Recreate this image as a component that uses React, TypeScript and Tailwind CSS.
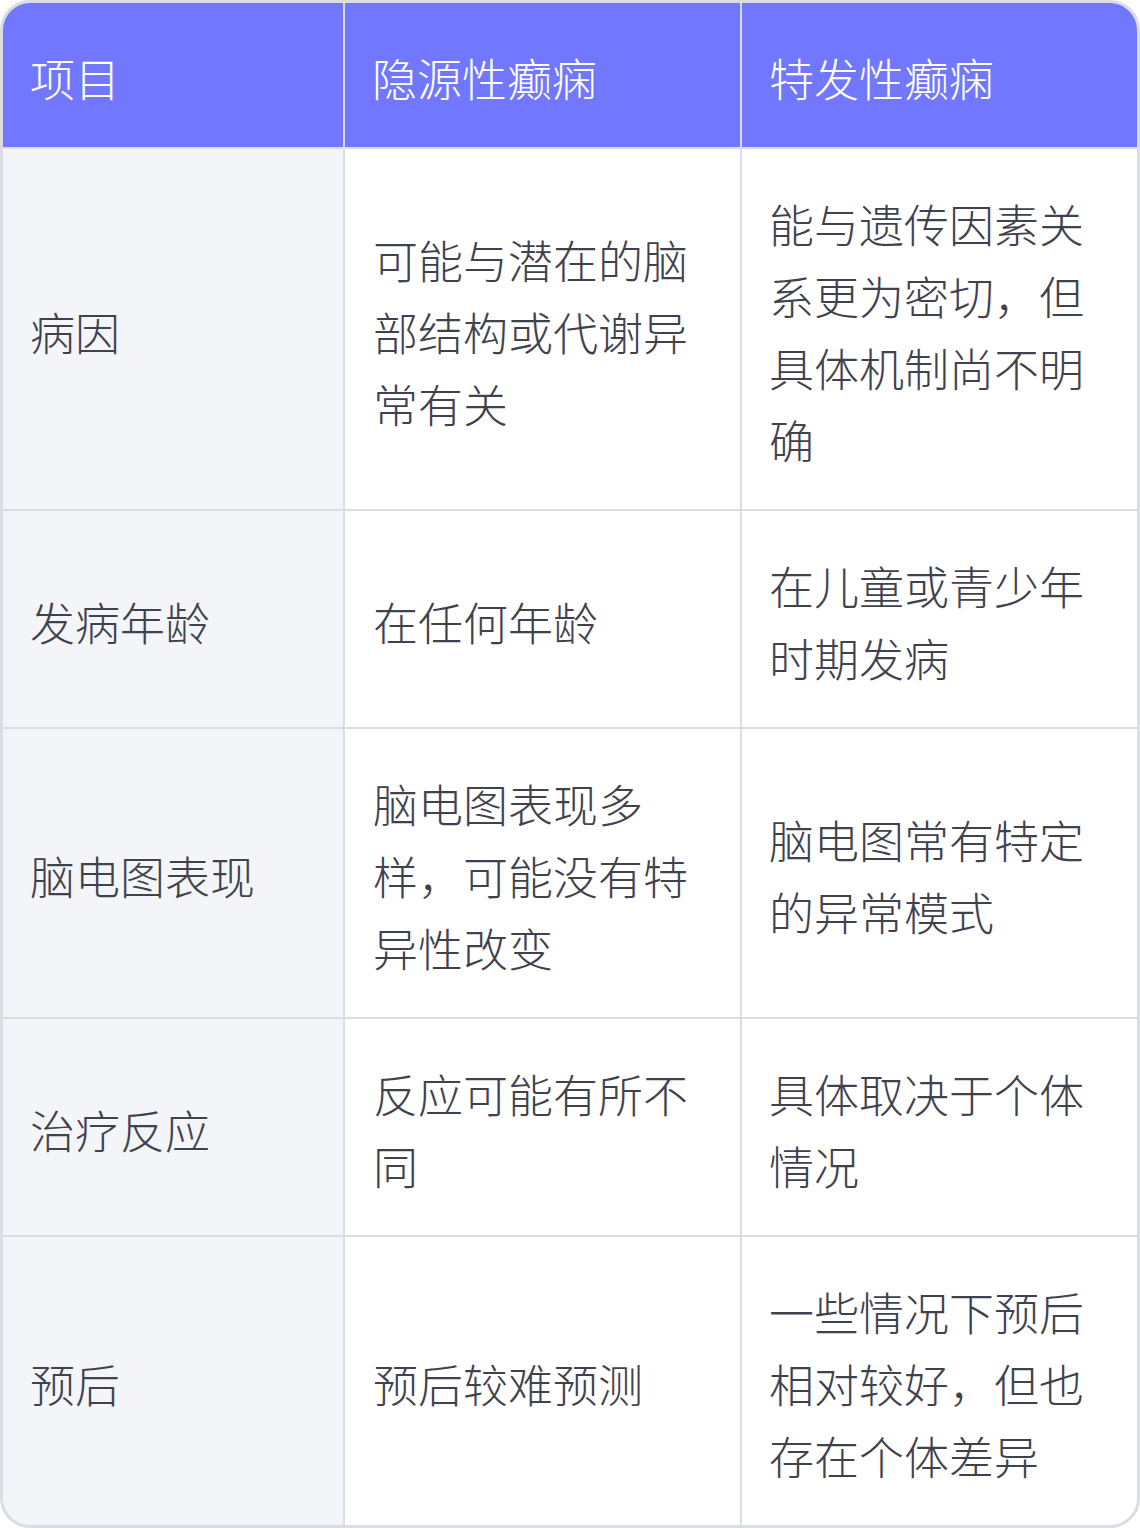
const headers = ["项目", "隐源性癫痫", "特发性癫痫"];

const rows: { label: string; cryptogenic: string; idiopathic: string; h: string }[] = [
  {
    label: "病因",
    cryptogenic: "可能与潜在的脑部结构或代谢异常有关",
    idiopathic: "能与遗传因素关系更为密切，但具体机制尚不明确",
    h: "h-[360px]",
  },
  {
    label: "发病年龄",
    cryptogenic: "在任何年龄",
    idiopathic: "在儿童或青少年时期发病",
    h: "h-[216px]",
  },
  {
    label: "脑电图表现",
    cryptogenic: "脑电图表现多样，可能没有特异性改变",
    idiopathic: "脑电图常有特定的异常模式",
    h: "h-[288px]",
  },
  {
    label: "治疗反应",
    cryptogenic: "反应可能有所不同",
    idiopathic: "具体取决于个体情况",
    h: "h-[216px]",
  },
  {
    label: "预后",
    cryptogenic: "预后较难预测",
    idiopathic: "一些情况下预后相对较好，但也存在个体差异",
    h: "h-[288px]",
  },
];

const font = "font-['Noto_Sans_CJK_SC','Noto_Sans',sans-serif]";

export default function App() {
  return (
    <div className={`w-[1140px] bg-white ${font}`}>
      <div className="border-[3px] border-[#dcdde2] rounded-[30px] overflow-hidden">
        <div className="grid grid-cols-[340px_395px_395px] gap-[2px] bg-[#dcdde2] text-[45px] leading-[72px] font-light">
          {headers.map((h) => (
            <div key={h} className="h-[144px] bg-[#7177ff] text-white px-[27px] pt-[6px] flex items-center">
              {h}
            </div>
          ))}
          {rows.map((r) => (
            <>
              <div key={r.label} className={`${r.h} bg-[#f4f5f9] text-[#3f424d] px-[27px] pt-[6px] flex items-center`}>
                {r.label}
              </div>
              <div className={`${r.h} bg-white text-[#3f424d] px-[28px] pt-[6px] flex items-center`}>
                <span>{r.cryptogenic}</span>
              </div>
              <div className={`${r.h} bg-white text-[#3f424d] px-[27px] pt-[6px] flex items-center`}>
                <span>{r.idiopathic}</span>
              </div>
            </>
          ))}
        </div>
      </div>
    </div>
  );
}
